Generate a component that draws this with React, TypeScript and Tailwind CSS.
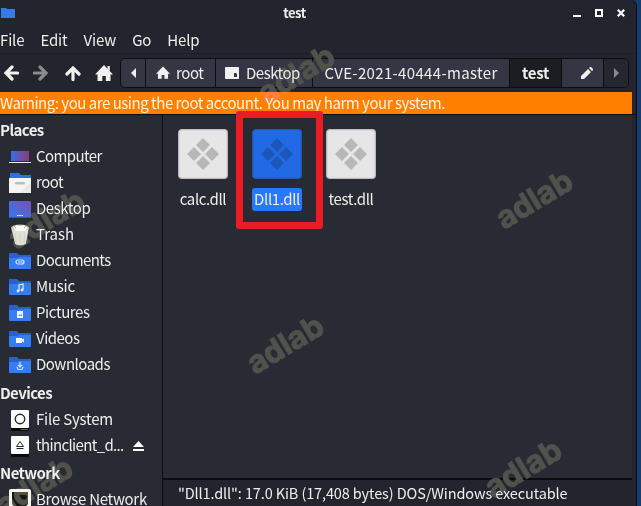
import type { ReactNode } from 'react';

function HomeIcon({ small }: { small?: boolean }) {
  return (
    <svg className={small ? 'h-[14px] w-[14px]' : 'h-[17px] w-[18px]'} viewBox="0 0 18 17" fill="#f0f0ee">
      <path d="M9 0 18 9.5h-2.5V16h-4.7v-5H7.3v5H2.5V9.5H0z" />
      {!small && <path d="M12.5 1h2.3v5l-2.3-2z" />}
    </svg>
  );
}

function Arrow({ className }: { className: string }) {
  return (
    <svg className={`h-4 w-4 ${className}`} viewBox="0 0 16 16" fill="none" stroke="currentColor" strokeWidth="3.2" strokeLinecap="round">
      <path d="M9 2 3 8l6 6M3 8h11.5" strokeLinejoin="miter" />
    </svg>
  );
}

function Folder({ children }: { children?: ReactNode }) {
  return (
    <svg className="h-4 w-[22px]" viewBox="0 0 22 16">
      <path d="M1 0h7l2 2h11a1 1 0 0 1 1 1v4H0V1a1 1 0 0 1 1-1z" fill="#2861ca" />
      <path d="M0 5h8l2-1h12v11a1 1 0 0 1-1 1H1a1 1 0 0 1-1-1z" fill="#377df2" />
      {children}
    </svg>
  );
}

const computer = (
  <svg className="h-3 w-[22px]" viewBox="0 0 22 12">
    <defs><linearGradient id="pc"><stop stopColor="#3571e4" /><stop offset="1" stopColor="#91377d" /></linearGradient></defs>
    <path d="M2 0h18v10H2z" fill="url(#pc)" /><path d="M0 11h22v1H0z" fill="#f4f4f4" />
  </svg>
);
const home = (
  <svg className="h-5 w-[22px]" viewBox="0 0 22 20">
    <path d="M1 0h9l2 2h10v6H1z" fill="#2f70e4" /><rect y="5" width="22" height="15" rx=".6" fill="#f5f5f5" />
    <path d="M10 20 22 9v11z" fill="#e9e9e9" /><rect x="6" y="9" width="10" height="2.4" rx="1.2" fill="#bcbcbc" />
  </svg>
);
const desktop = (
  <svg className="h-[17px] w-[22px]" viewBox="0 0 22 17">
    <defs><linearGradient id="dt" x1="0" y1="1" x2="1" y2="0"><stop stopColor="#347bee" /><stop offset="1" stopColor="#7850b5" /></linearGradient></defs>
    <rect width="22" height="17" rx="1" fill="url(#dt)" /><path d="M0 16h22v1H0z" fill="#1f5cbd" />
    <path d="M8 14h1.5v1H8zm2.2 0h1.6v1h-1.6zm2.3 0H14v1h-1.5z" fill="#fff" />
  </svg>
);
const trash = (
  <svg className="h-[22px] w-[22px]" viewBox="0 0 22 22">
    <path d="M2 3h18l-3 17q-6 3-11 0z" fill="#e0e0d6" /><path d="m6 9 1 10M11 9v11M16 9l-1 10" stroke="#d2d2c7" />
    <ellipse cx="11" cy="3.5" rx="9" ry="3" fill="#b9bab2" /><path d="m4 3 4-2 3 1 4-1 4 3-3 3H6z" fill="#fbfbf5" /><path d="m5 2 2 2m8 0 2-2" stroke="#aeb77d" />
  </svg>
);
const docs = <Folder><rect x="7" y="7" width="8" height="4" rx="2" fill="none" stroke="#d7e5fd" strokeWidth="1.2" /><path d="M9 9h5" stroke="#d7e5fd" /></Folder>;
const music = <Folder><path d="M10 12V6l4-1v6" fill="none" stroke="#e1ebfd" strokeWidth="1.2" /><circle cx="9" cy="12" r="1.4" fill="#e1ebfd" /><circle cx="13" cy="11" r="1.4" fill="#e1ebfd" /></Folder>;
const pictures = <Folder><rect x="8" y="6" width="6" height="7" fill="#f3f7ff" /><path d="m9 11 2-2 1 1 1-1v2z" fill="#6596e8" /></Folder>;
const videos = <Folder><path d="M7 7h6v1.5l2-1v4l-2-1V12H7z" fill="#f7faff" /></Folder>;
const downloads = <Folder><path d="M11 5v5M9 8l2 2 2-2M8 10l1 2.5h4l1-2.5" fill="none" stroke="#d4e3fc" strokeWidth="1.2" /></Folder>;

function Drive({ removable }: { removable?: boolean }) {
  return (
    <svg className="h-[21px] w-[18px]" viewBox="0 0 18 21">
      <rect y="16" width="18" height="5" rx="1" fill="#08090b" /><rect width="18" height="18" rx="1" fill="#fbfbfb" />
      {removable ? <g fill="none" stroke="#25272a"><path d="m9 5.5-3.5 5h7zM5.5 12.5h7" /></g> : <circle cx="9" cy="9" r="4.7" fill="none" stroke="#25272a" strokeWidth="1.4" />}
      {!removable && <path d="M10 19.5h7" stroke="#aaa" strokeWidth=".6" />}
    </svg>
  );
}
const network = (
  <svg className="h-[22px] w-[22px]" viewBox="0 0 22 22">
    <rect width="22" height="22" rx="2" fill="#f5f5ec" /><path d="M3 3h16v12l-4 4H7l-4-4z" fill="#151712" /><path d="M6 3v3m2-3v3m2-3v3m2-3v3m2-3v3m2-3v3" stroke="#958d51" />
  </svg>
);

function Place({ icon, label, eject, tracking = 'tracking-[-0.5px]' }: { icon: ReactNode; label: string; eject?: boolean; tracking?: string }) {
  return (
    <div className="flex h-[26px] shrink-0 items-center whitespace-nowrap pl-[9px]">
      <span className="flex w-[22px] items-center justify-center">{icon}</span>
      <span className={`ml-[5px] pb-0.5 ${tracking}`}>{label}</span>
      {eject && <svg className="ml-[9px] h-[10px] w-[11px]" viewBox="0 0 11 10" fill="#fff"><path d="m5.5 0 5.5 6H0zM0 8h11v2H0z" /></svg>}
    </div>
  );
}

function FileItem({ name, selected }: { name: string; selected?: boolean }) {
  return (
    <div className="flex w-[74px] flex-col items-center">
      <svg className="h-[50px] w-[50px]" viewBox="0 0 50 50">
        <rect x=".7" y=".7" width="48.6" height="48.6" rx="3" fill={selected ? '#226ae5' : '#e6e6e6'} stroke={selected ? '#2458af' : '#bebebe'} strokeWidth="1.3" />
        <path d="m25 9 7 7-7 7-7-7zm-9 9 7 7-7 7-7-7zm18 0 7 7-7 7-7-7zm-9 9 7 7-7 7-7-7z" fill={selected ? '#1b56b9' : '#b7b7b7'} />
      </svg>
      <span className={`mt-[9px] flex h-[23px] items-center justify-center rounded-[3px] pb-0.5 tracking-[-0.4px] ${selected ? 'w-[50px] bg-[#2777ff]' : ''}`}>{name}</span>
    </div>
  );
}

function Mark({ className }: { className: string }) {
  return <span className={`pointer-events-none absolute flex h-10 w-[90px] -rotate-[31deg] items-center justify-center font-['Inter',sans-serif] text-[31px] font-bold text-[#50524b] mix-blend-lighten [-webkit-text-stroke:1px_#50524b] ${className}`}>adlab</span>;
}

export default function App() {
  return (
    <div className="relative h-[506px] w-[641px] overflow-hidden bg-[#153d70] font-['Noto_Sans_CJK_SC',sans-serif] text-[15px] leading-5 text-[#eeeeec]">
      <div className="flex h-[506px] w-[637px] flex-col rounded-tr-md border-r border-[#08090b] bg-[#23252e]">
        <header className="grid h-[26px] shrink-0 grid-cols-[1fr_60px_1fr] items-center">
          <svg className="ml-px h-[10px] w-[14px]" viewBox="0 0 14 10"><path d="M0 0h5l1 1h8v9H0z" fill="#3579ed" /></svg>
          <b className="-ml-[47px] text-center text-[13px] leading-5 tracking-[-0.5px]">test</b>
          <div className="flex items-center justify-end gap-[14px] pr-[11px] text-white">
            <svg className="h-[8px] w-[8px]" viewBox="0 0 8 8"><path d="M0 6h8v2H0z" fill="currentColor" /></svg>
            <svg className="h-2 w-2" viewBox="0 0 8 8"><path d="M1 1h6v6H1z" fill="none" stroke="currentColor" strokeWidth="2" /></svg>
            <svg className="h-2 w-2" viewBox="0 0 8 8"><path d="m.8.8 6.4 6.4m0-6.4L.8 7.2" stroke="currentColor" strokeWidth="2.2" /></svg>
          </div>
        </header>
        <nav className="flex h-[27px] shrink-0 items-center gap-4 pb-px pt-[2px] tracking-[-0.15px]">
          <span>File</span><span>Edit</span><span>View</span><span>Go</span><span>Help</span>
        </nav>
        <div className="flex h-[39px] shrink-0 items-center border-t border-[#1d1f27] pl-[3px]">
          <Arrow className="text-[#f0f0ee]" />
          <Arrow className="ml-[14px] rotate-180 text-[#8a8b8e]" />
          <Arrow className="ml-4 rotate-90 text-[#f0f0ee]" />
          <span className="ml-[14px]"><HomeIcon /></span>
          <div className="ml-[7px] flex h-[30px] w-[509px] overflow-hidden rounded-[5px] border border-[#0c0d10] bg-[#343743] [&>span]:pb-px">
            <span className="flex w-[25px] items-center justify-center border-r border-[#0c0d10]"><svg className="h-[10px] w-[5px]" viewBox="0 0 5 10"><path d="M5 0v10L0 5z" fill="#eee" /></svg></span>
            <span className="flex w-[70px] items-center border-r border-[#0c0d10] pl-[10px]"><HomeIcon small /><span className="ml-[6px] tracking-[-0.4px]">root</span></span>
            <span className="flex w-[97px] items-center border-r border-[#0c0d10] pl-[9px]"><svg className="h-3 w-[14px]" viewBox="0 0 14 12"><rect width="14" height="12" rx=".8" fill="#f0f0ee" /><path d="M9 6h2l1 1v3H9z" fill="#343743" /></svg><span className="ml-[7px] tracking-[-0.5px]">Desktop</span></span>
            <span className="flex w-[197px] items-center justify-center border-r border-[#0c0d10] tracking-[0.34px]">CVE-2021-40444-master</span>
            <b className="flex w-[52px] items-center justify-center border-r border-[#0c0d10] bg-[#1b1d23] pb-px tracking-[-0.3px]">test</b>
            <span className="flex w-[42px] items-center justify-center border-r border-[#0c0d10] pl-2"><svg className="h-3 w-3" viewBox="0 0 12 12" fill="#f0f0ee"><path d="M0 12V9l7-7 3 3-7 7zM8 1l1-1h1l2 2v1l-1 1z" /></svg></span>
            <span className="flex flex-1 items-center justify-center bg-[#242630]"><svg className="h-[10px] w-[5px]" viewBox="0 0 5 10"><path d="M0 0v10l5-5z" fill="#888a8e" /></svg></span>
          </div>
        </div>
        <div className="flex h-[22px] w-[632px] shrink-0 items-center whitespace-nowrap bg-[#ff8000] pb-px tracking-[-0.47px] text-[#fff4e7]">Warning: you are using the root account. You may harm your system.</div>
        <main className="flex min-h-0 flex-1 border-t border-[#0c0d10]">
          <aside className="flex w-[163px] shrink-0 flex-col overflow-hidden border-r border-[#0c0d10] bg-[#282a34]">
            <b className="flex h-[29px] shrink-0 items-center tracking-[-0.6px]">Places</b>
            <Place icon={computer} label="Computer" tracking="tracking-[-0.6px]" /><Place icon={home} label="root" /><Place icon={desktop} label="Desktop" tracking="tracking-[-0.45px]" /><Place icon={trash} label="Trash" tracking="tracking-[0px]" />
            <Place icon={docs} label="Documents" tracking="tracking-[-0.6px]" /><Place icon={music} label="Music" tracking="tracking-[-0.25px]" /><Place icon={pictures} label="Pictures" tracking="tracking-[-0.4px]" /><Place icon={videos} label="Videos" /><Place icon={downloads} label="Downloads" />
            <b className="flex h-[29px] shrink-0 items-center tracking-[-0.6px]">Devices</b>
            <Place icon={<Drive />} label="File System" tracking="tracking-[-0.22px]" /><Place icon={<Drive removable />} label="thinclient_d..." tracking="tracking-[-0.65px]" eject />
            <b className="flex h-7 shrink-0 items-center tracking-[-0.6px]">Network</b>
            <Place icon={network} label="Browse Network" tracking="tracking-[-0.3px]" />
          </aside>
          <div className="flex w-[469px] flex-col">
            <section className="flex h-[365px] shrink-0 items-start border-b-2 border-[#0c0d10] bg-[#282a34] pl-[3px] pt-[14px]">
              <FileItem name="calc.dll" /><FileItem name="Dll1.dll" selected /><FileItem name="test.dll" />
            </section>
            <footer className="flex flex-1 items-center whitespace-nowrap pl-[15px] pb-px text-[14.5px] tracking-[-0.12px]">"Dll1.dll": 17.0 KiB (17,408 bytes) DOS/Windows executable</footer>
          </div>
        </main>
      </div>
      <Mark className="left-[251px] top-[54px]" /><Mark className="left-[1px] top-[199px]" /><Mark className="left-[489px] top-[179px]" />
      <Mark className="left-[240px] top-[324px]" /><Mark className="left-[478px] top-[448px]" /><Mark className="-left-[11px] top-[466px]" />
      <div className="absolute left-[236px] top-[111px] h-[118px] w-[87px] rounded-[3px] border-[7px] border-[#ed1c24]" />
    </div>
  );
}
